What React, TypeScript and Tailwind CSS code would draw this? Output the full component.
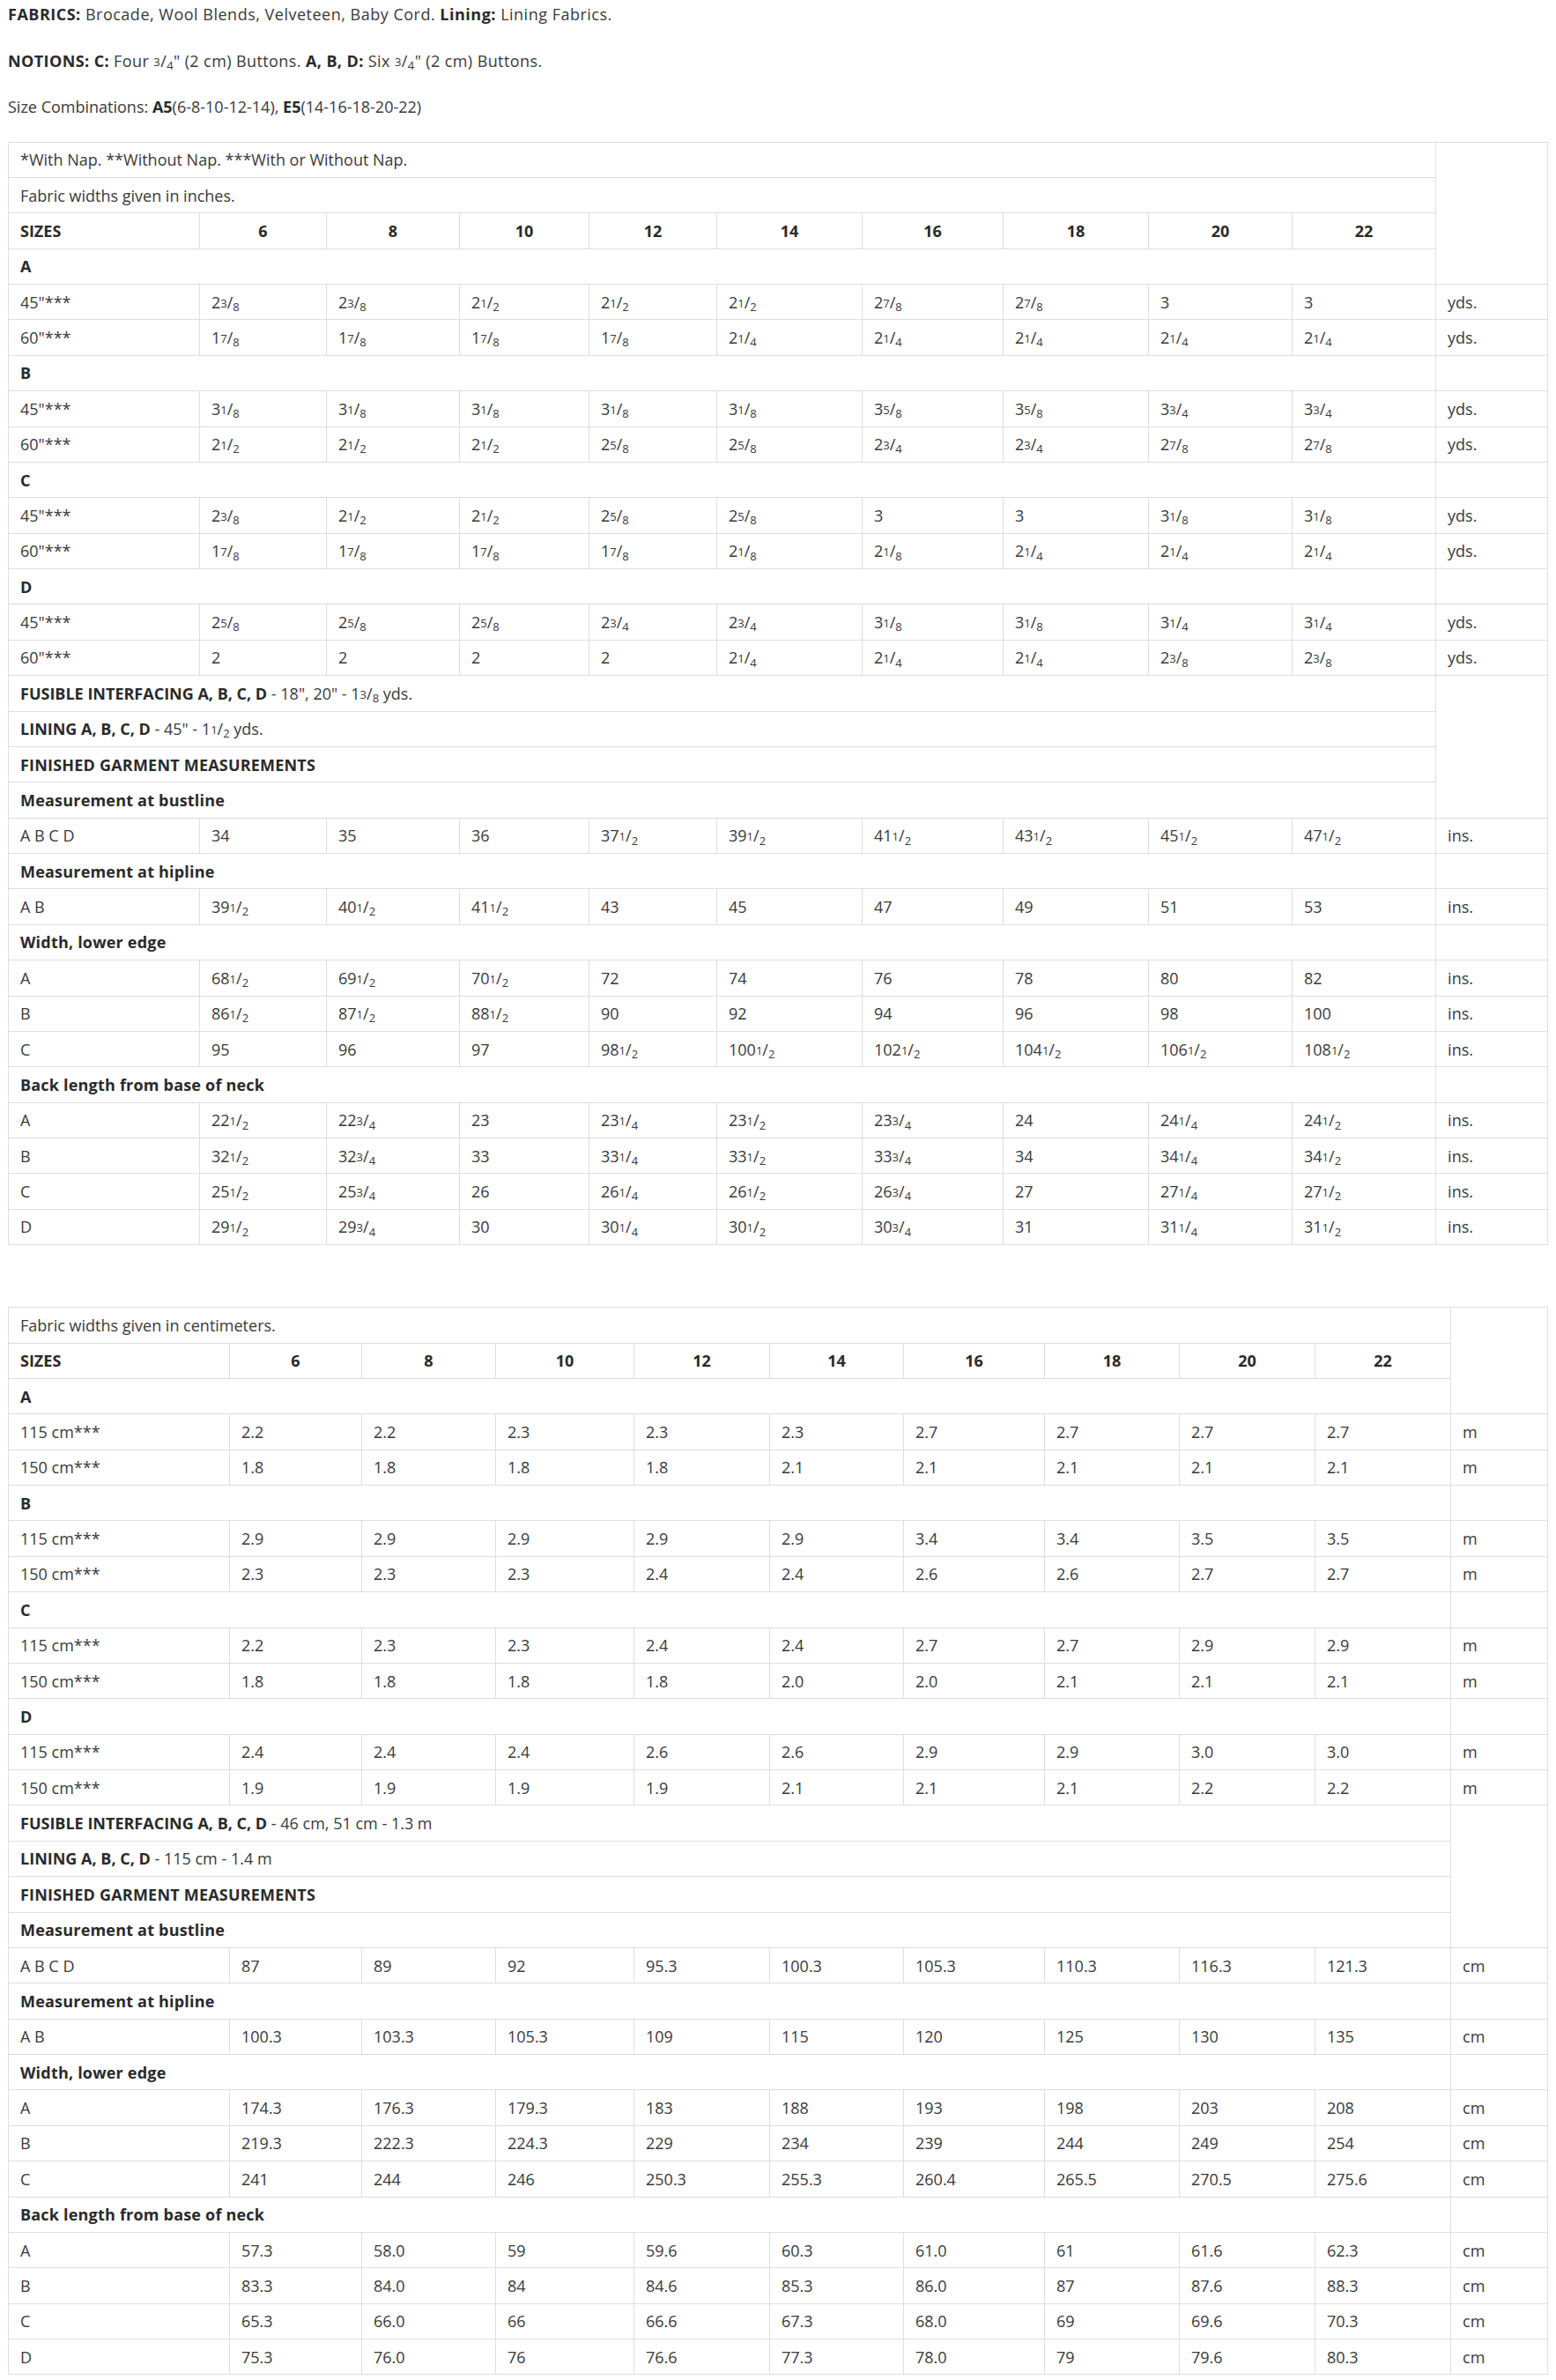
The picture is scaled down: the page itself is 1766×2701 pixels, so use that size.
import React from 'react';

type Row =
  | { kind: 'span'; content: React.ReactNode; bold?: boolean; unitSpan?: number; noUnit?: boolean }
  | { kind: 'sizes' }
  | { kind: 'data'; label: string; values: string[]; unit: string };

const SIZES = ['6', '8', '10', '12', '14', '16', '18', '20', '22'];

// "2 3/8" -> 2 with small numerator / denominator, "3/4" -> plain fraction
const Frac = ({ v }: { v: string }) => {
  const m = v.match(/^(?:(\d+) )?(\d+)\/(\d+)$/);
  if (!m) return <>{v}</>;
  return (
    <>
      {m[1] ?? ''}
      <sup className="text-[13px] relative -top-[1px]">{m[2]}</sup>/<sub className="text-[13px]">{m[3]}</sub>
    </>
  );
};

const B = ({ children }: { children: React.ReactNode }) => <b className="font-bold text-[#2a2a2a]">{children}</b>;

const rep = (v: string, n: number) => Array(n).fill(v);

const inchRows: Row[] = [
  { kind: 'span', content: '*With Nap. **Without Nap. ***With or Without Nap.', unitSpan: 4 },
  { kind: 'span', content: 'Fabric widths given in inches.', noUnit: true },
  { kind: 'sizes' },
  { kind: 'span', content: 'A', bold: true, noUnit: true },
  { kind: 'data', label: '45"***', values: ['2 3/8', '2 3/8', '2 1/2', '2 1/2', '2 1/2', '2 7/8', '2 7/8', '3', '3'], unit: 'yds.' },
  { kind: 'data', label: '60"***', values: [...rep('1 7/8', 4), ...rep('2 1/4', 5)], unit: 'yds.' },
  { kind: 'span', content: 'B', bold: true },
  { kind: 'data', label: '45"***', values: [...rep('3 1/8', 5), '3 5/8', '3 5/8', '3 3/4', '3 3/4'], unit: 'yds.' },
  { kind: 'data', label: '60"***', values: [...rep('2 1/2', 3), '2 5/8', '2 5/8', '2 3/4', '2 3/4', '2 7/8', '2 7/8'], unit: 'yds.' },
  { kind: 'span', content: 'C', bold: true },
  { kind: 'data', label: '45"***', values: ['2 3/8', '2 1/2', '2 1/2', '2 5/8', '2 5/8', '3', '3', '3 1/8', '3 1/8'], unit: 'yds.' },
  { kind: 'data', label: '60"***', values: [...rep('1 7/8', 4), '2 1/8', '2 1/8', '2 1/4', '2 1/4', '2 1/4'], unit: 'yds.' },
  { kind: 'span', content: 'D', bold: true },
  { kind: 'data', label: '45"***', values: [...rep('2 5/8', 3), '2 3/4', '2 3/4', '3 1/8', '3 1/8', '3 1/4', '3 1/4'], unit: 'yds.' },
  { kind: 'data', label: '60"***', values: ['2', '2', '2', '2', '2 1/4', '2 1/4', '2 1/4', '2 3/8', '2 3/8'], unit: 'yds.' },
  {
    kind: 'span',
    unitSpan: 4,
    content: (
      <>
        <B>FUSIBLE INTERFACING A, B, C, D</B> - 18", 20" - <Frac v="1 3/8" /> yds.
      </>
    ),
  },
  {
    kind: 'span',
    noUnit: true,
    content: (
      <>
        <B>LINING A, B, C, D</B> - 45" - <Frac v="1 1/2" /> yds.
      </>
    ),
  },
  { kind: 'span', content: 'FINISHED GARMENT MEASUREMENTS', bold: true, noUnit: true },
  { kind: 'span', content: 'Measurement at bustline', bold: true, noUnit: true },
  { kind: 'data', label: 'A B C D', values: ['34', '35', '36', '37 1/2', '39 1/2', '41 1/2', '43 1/2', '45 1/2', '47 1/2'], unit: 'ins.' },
  { kind: 'span', content: 'Measurement at hipline', bold: true },
  { kind: 'data', label: 'A B', values: ['39 1/2', '40 1/2', '41 1/2', '43', '45', '47', '49', '51', '53'], unit: 'ins.' },
  { kind: 'span', content: 'Width, lower edge', bold: true },
  { kind: 'data', label: 'A', values: ['68 1/2', '69 1/2', '70 1/2', '72', '74', '76', '78', '80', '82'], unit: 'ins.' },
  { kind: 'data', label: 'B', values: ['86 1/2', '87 1/2', '88 1/2', '90', '92', '94', '96', '98', '100'], unit: 'ins.' },
  { kind: 'data', label: 'C', values: ['95', '96', '97', '98 1/2', '100 1/2', '102 1/2', '104 1/2', '106 1/2', '108 1/2'], unit: 'ins.' },
  { kind: 'span', content: 'Back length from base of neck', bold: true },
  { kind: 'data', label: 'A', values: ['22 1/2', '22 3/4', '23', '23 1/4', '23 1/2', '23 3/4', '24', '24 1/4', '24 1/2'], unit: 'ins.' },
  { kind: 'data', label: 'B', values: ['32 1/2', '32 3/4', '33', '33 1/4', '33 1/2', '33 3/4', '34', '34 1/4', '34 1/2'], unit: 'ins.' },
  { kind: 'data', label: 'C', values: ['25 1/2', '25 3/4', '26', '26 1/4', '26 1/2', '26 3/4', '27', '27 1/4', '27 1/2'], unit: 'ins.' },
  { kind: 'data', label: 'D', values: ['29 1/2', '29 3/4', '30', '30 1/4', '30 1/2', '30 3/4', '31', '31 1/4', '31 1/2'], unit: 'ins.' },
];

const cmRows: Row[] = [
  { kind: 'span', content: 'Fabric widths given in centimeters.', unitSpan: 3 },
  { kind: 'sizes' },
  { kind: 'span', content: 'A', bold: true, noUnit: true },
  { kind: 'data', label: '115 cm***', values: ['2.2', '2.2', '2.3', '2.3', '2.3', '2.7', '2.7', '2.7', '2.7'], unit: 'm' },
  { kind: 'data', label: '150 cm***', values: [...rep('1.8', 4), ...rep('2.1', 5)], unit: 'm' },
  { kind: 'span', content: 'B', bold: true },
  { kind: 'data', label: '115 cm***', values: [...rep('2.9', 5), '3.4', '3.4', '3.5', '3.5'], unit: 'm' },
  { kind: 'data', label: '150 cm***', values: ['2.3', '2.3', '2.3', '2.4', '2.4', '2.6', '2.6', '2.7', '2.7'], unit: 'm' },
  { kind: 'span', content: 'C', bold: true },
  { kind: 'data', label: '115 cm***', values: ['2.2', '2.3', '2.3', '2.4', '2.4', '2.7', '2.7', '2.9', '2.9'], unit: 'm' },
  { kind: 'data', label: '150 cm***', values: [...rep('1.8', 4), '2.0', '2.0', '2.1', '2.1', '2.1'], unit: 'm' },
  { kind: 'span', content: 'D', bold: true },
  { kind: 'data', label: '115 cm***', values: ['2.4', '2.4', '2.4', '2.6', '2.6', '2.9', '2.9', '3.0', '3.0'], unit: 'm' },
  { kind: 'data', label: '150 cm***', values: [...rep('1.9', 4), '2.1', '2.1', '2.1', '2.2', '2.2'], unit: 'm' },
  {
    kind: 'span',
    unitSpan: 4,
    content: (
      <>
        <B>FUSIBLE INTERFACING A, B, C, D</B> - 46 cm, 51 cm - 1.3 m
      </>
    ),
  },
  {
    kind: 'span',
    noUnit: true,
    content: (
      <>
        <B>LINING A, B, C, D</B> - 115 cm - 1.4 m
      </>
    ),
  },
  { kind: 'span', content: 'FINISHED GARMENT MEASUREMENTS', bold: true, noUnit: true },
  { kind: 'span', content: 'Measurement at bustline', bold: true, noUnit: true },
  { kind: 'data', label: 'A B C D', values: ['87', '89', '92', '95.3', '100.3', '105.3', '110.3', '116.3', '121.3'], unit: 'cm' },
  { kind: 'span', content: 'Measurement at hipline', bold: true },
  { kind: 'data', label: 'A B', values: ['100.3', '103.3', '105.3', '109', '115', '120', '125', '130', '135'], unit: 'cm' },
  { kind: 'span', content: 'Width, lower edge', bold: true },
  { kind: 'data', label: 'A', values: ['174.3', '176.3', '179.3', '183', '188', '193', '198', '203', '208'], unit: 'cm' },
  { kind: 'data', label: 'B', values: ['219.3', '222.3', '224.3', '229', '234', '239', '244', '249', '254'], unit: 'cm' },
  { kind: 'data', label: 'C', values: ['241', '244', '246', '250.3', '255.3', '260.4', '265.5', '270.5', '275.6'], unit: 'cm' },
  { kind: 'span', content: 'Back length from base of neck', bold: true },
  { kind: 'data', label: 'A', values: ['57.3', '58.0', '59', '59.6', '60.3', '61.0', '61', '61.6', '62.3'], unit: 'cm' },
  { kind: 'data', label: 'B', values: ['83.3', '84.0', '84', '84.6', '85.3', '86.0', '87', '87.6', '88.3'], unit: 'cm' },
  { kind: 'data', label: 'C', values: ['65.3', '66.0', '66', '66.6', '67.3', '68.0', '69', '69.6', '70.3'], unit: 'cm' },
  { kind: 'data', label: 'D', values: ['75.3', '76.0', '76', '76.6', '77.3', '78.0', '79', '79.6', '80.3'], unit: 'cm' },
];

const cell = 'border border-[#dedede] px-[13px] py-[7.7px] leading-[24px] align-middle';

const SizeTable = ({ rows, cols }: { rows: Row[]; cols: number[] }) => (
  <table className="table-fixed border-collapse w-[1747px] text-[#3a3a3a]">
    <colgroup>
      {cols.map((w, i) => (
        <col key={i} style={{ width: w }} />
      ))}
    </colgroup>
    <tbody>
      {rows.map((r, i) => {
        if (r.kind === 'sizes') {
          return (
            <tr key={i}>
              <td className={`${cell} font-bold text-[#2a2a2a]`}>SIZES</td>
              {SIZES.map((s) => (
                <td key={s} className={`${cell} font-bold text-center text-[#2a2a2a]`}>
                  {s}
                </td>
              ))}
            </tr>
          );
        }
        if (r.kind === 'span') {
          return (
            <tr key={i}>
              <td colSpan={10} className={`${cell} ${r.bold ? 'font-bold text-[#2a2a2a] tracking-[0.2px]' : ''}`}>
                {r.content}
              </td>
              {!r.noUnit && <td rowSpan={r.unitSpan ?? 1} className={cell}></td>}
            </tr>
          );
        }
        return (
          <tr key={i}>
            <td className={cell}>{r.label}</td>
            {r.values.map((v, j) => (
              <td key={j} className={cell}>
                <Frac v={v} />
              </td>
            ))}
            <td className={cell}>{r.unit}</td>
          </tr>
        );
      })}
    </tbody>
  </table>
);

export default function App() {
  return (
    <div className="bg-white w-[1766px] pl-[9px] pt-[3px] pb-[6px] text-[18px] text-[#3a3a3a] font-['Open_Sans',sans-serif]">
      <p className="leading-[26.5px] mb-[26px] tracking-[0.5px]">
        <B>FABRICS:</B> Brocade, Wool Blends, Velveteen, Baby Cord. <B>Lining:</B> Lining Fabrics.
      </p>
      <p className="leading-[26.5px] mb-[26px] tracking-[0.4px]">
        <B>NOTIONS: C:</B> Four <Frac v="3/4" />
        {'" (2 cm) Buttons. '}
        <B>A, B, D:</B> Six <Frac v="3/4" />
        {'" (2 cm) Buttons.'}
      </p>
      <p className="leading-[26.5px] mb-[26px]">
        Size Combinations: <B>A5</B>(6-8-10-12-14), <B>E5</B>(14-16-18-20-22)
      </p>
      <SizeTable rows={inchRows} cols={[217, 144, 151, 147, 145, 165, 160, 165, 163, 163, 127]} />
      <div className="h-[70px]" />
      <SizeTable rows={cmRows} cols={[251, 150, 152, 157, 154, 152, 160, 153, 154, 154, 110]} />
    </div>
  );
}
